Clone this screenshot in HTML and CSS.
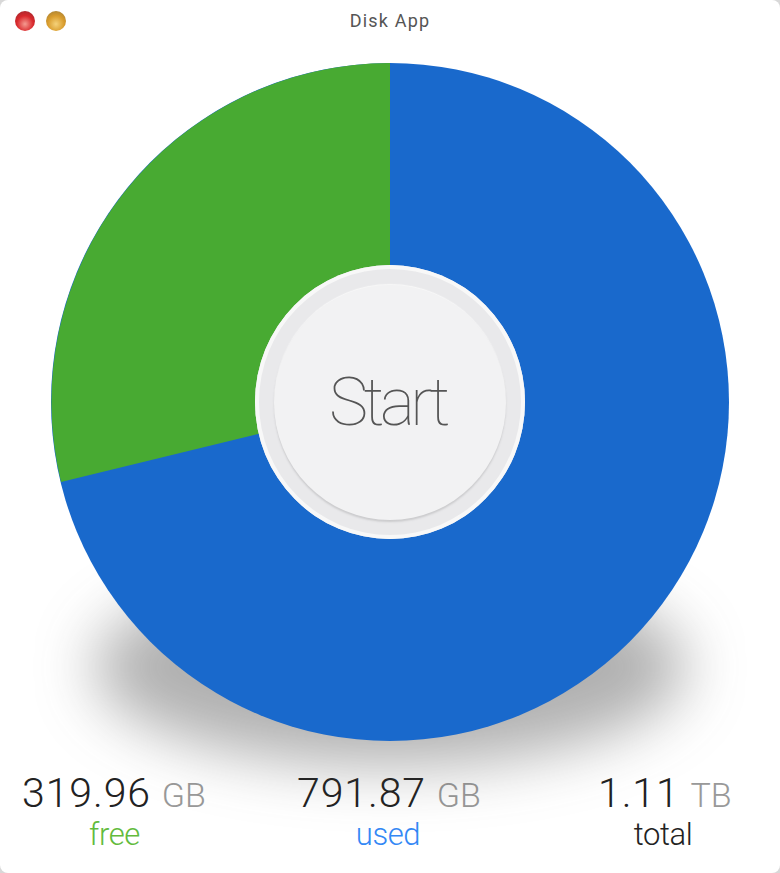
FILE: index.html
```html
<!DOCTYPE html>
<html>
<head>
  <title>Disk App</title>
  <link rel="stylesheet" href="styles.css">
</head>
<body>
  <div class="window">
    <div class="titlebar">
      <div class="traffic-lights">
        <span class="light light-close"></span>
        <span class="light light-minimize"></span>
      </div>
      <div class="title">Disk App</div>
    </div>

    <div class="chart">
      <div class="chart-shadow"></div>
      <svg class="pie" width="680" height="680" viewBox="0 0 680 680">
        <circle cx="340" cy="339" r="339" fill="#1969cc" />
        <path d="M340 339 L340 0 A339 339 0 0 0 11 419 Z" fill="#48aa32" />
      </svg>
      <button class="start-btn"><span class="start-inner">Start</span></button>
    </div>

    <div class="stats">
      <div class="stat">
        <div class="stat-value">319.96 <span class="stat-unit">GB</span></div>
        <div class="stat-label label-free">free</div>
      </div>
      <div class="stat">
        <div class="stat-value">791.87 <span class="stat-unit">GB</span></div>
        <div class="stat-label label-used">used</div>
      </div>
      <div class="stat">
        <div class="stat-value">1.11 <span class="stat-unit">TB</span></div>
        <div class="stat-label label-total">total</div>
      </div>
    </div>
  </div>
</body>
</html>
```

FILE: styles.css
```css
html, body {
  margin: 0;
  padding: 0;
  background: #d8d8d8;
}

.window {
  width: 780px;
  height: 873px;
  background: white;
  border-radius: 8px;
  overflow: hidden;
  font-family: Roboto, 'Liberation Sans', Arial, sans-serif;
}

.titlebar {
  display: flex;
  align-items: center;
  height: 41px;
  padding-left: 15px;
  position: relative;
}

.traffic-lights {
  display: flex;
  gap: 11px;
}

.light {
  width: 20px;
  height: 20px;
  border-radius: 50%;
}

.light-close {
  background: radial-gradient(circle at 50% 65%, #f59a90, #d9282c 50%, #8f2a30);
}

.light-minimize {
  background: radial-gradient(circle at 50% 65%, #f5d27a, #d99c2c 50%, #96783a);
}

.title {
  flex: 1;
  text-align: center;
  margin-left: -66px;
  font-size: 18px;
  letter-spacing: 1.2px;
  color: #555;
}

.chart {
  position: relative;
  width: 680px;
  height: 680px;
  margin: 22px 0 0 50px;
}

.pie {
  display: block;
  position: relative;
}

.chart-shadow {
  position: absolute;
  left: 44px;
  top: 505px;
  width: 592px;
  height: 198px;
  border-radius: 50%;
  background: rgba(60, 60, 60, 0.4);
  filter: blur(30px);
}

.start-btn {
  position: absolute;
  left: 205px;
  top: 202px;
  width: 270px;
  height: 274px;
  padding: 0;
  border: none;
  border-radius: 50%;
  background: #e9e9eb;
  box-shadow: inset 0 0 0 4px #f8f8f8;
  display: flex;
  align-items: center;
  justify-content: center;
}

.start-inner {
  width: 232px;
  height: 235px;
  padding-right: 5px;
  box-sizing: border-box;
  border-radius: 50%;
  background: #f2f2f3;
  box-shadow: 0 2px 2px #cbcbcd, 0 -1px 1px #f8f8f8;
  display: flex;
  align-items: center;
  justify-content: center;
  font-family: Roboto, 'Liberation Sans', Arial, sans-serif;
  font-size: 66px;
  font-weight: 100;
  letter-spacing: -4.5px;
  color: #555;
}

.stats {
  display: grid;
  grid-template-columns: 275px 301px 130px;
  padding-left: 22px;
  margin-top: 26px;
  text-align: center;
}

.stat-value {
  font-size: 41px;
  font-weight: 300;
  letter-spacing: 0.9px;
  line-height: 48px;
  color: #222;
  white-space: nowrap;
  text-align: left;
}

.stat-unit {
  font-size: 34px;
  letter-spacing: 0;
  color: #999;
}

.stat-label {
  font-size: 31px;
  font-weight: 300;
  letter-spacing: -0.4px;
  line-height: 32px;
}

.stat:nth-child(1) .stat-label {
  width: 185px;
}

.stat:nth-child(2) .stat-label {
  width: 182px;
}

.label-free {
  color: #62bb3c;
}

.label-used {
  color: #3388f5;
}

.label-total {
  color: #222;
}
```
